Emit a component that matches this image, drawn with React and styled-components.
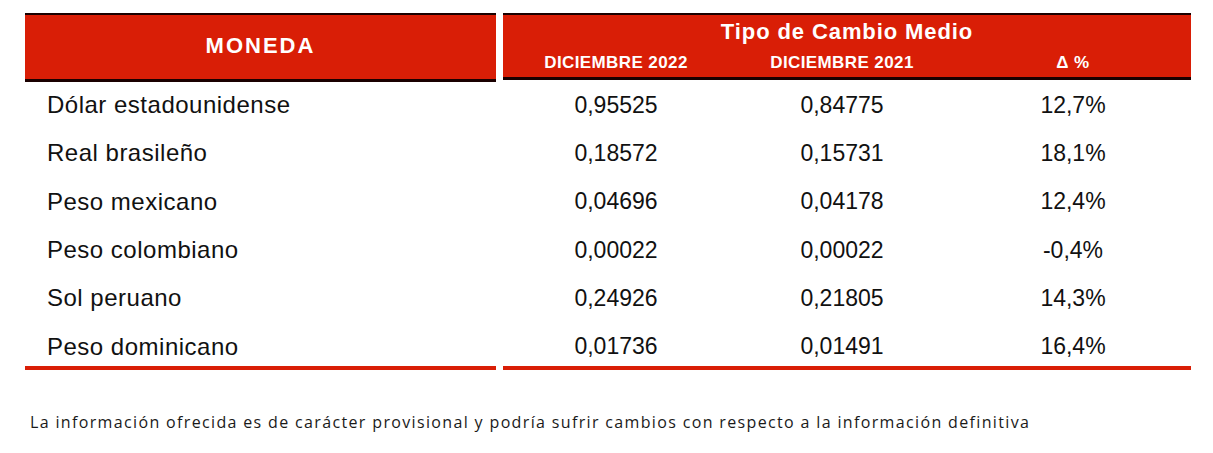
import React from "react";
import styled, { createGlobalStyle } from "styled-components";

const RED = "#d91e06";

const Global = createGlobalStyle`
  html, body { margin: 0; padding: 0; background: #ffffff; }
  body { font-family: "Liberation Sans", Arial, sans-serif; }
`;

const Page = styled.div`
  width: 1213px;
  height: 453px;
  box-sizing: border-box;
  padding: 13px 0 0 25px;
  background: #fff;
`;

const Header = styled.div`
  display: grid;
  grid-template-columns: 471px 688px;
  column-gap: 7px;
`;

const HeadCell = styled.div`
  background: ${RED};
  border-top: 2px solid #1a0000;
  border-bottom: 3px solid #1a0000;
  height: 62px;
  color: #fff;
  font-weight: 700;
`;

const MonedaCell = styled(HeadCell)`
  display: flex;
  align-items: center;
  justify-content: center;
  font-size: 22px;
  letter-spacing: 2px;
  padding-bottom: 2px;
  box-sizing: content-box;
`;

const GroupCell = styled(HeadCell)`
  display: flex;
  flex-direction: column;
`;

const GroupTitle = styled.div`
  height: 34px;
  display: flex;
  align-items: center;
  justify-content: center;
  font-size: 22px;
  letter-spacing: 0.9px;
`;

const SubRow = styled.div`
  display: grid;
  grid-template-columns: 226px 226px 236px;
  align-items: center;
  height: 28px;
`;

const SubHead = styled.div`
  text-align: center;
  font-size: 17px;
  letter-spacing: 0.4px;
`;

const Body = styled.div`
  display: flex;
  flex-direction: column;
  margin-top: -1px;
`;

const Row = styled.div`
  display: grid;
  grid-template-columns: 478px 226px 226px 236px;
  height: 48.3px;
  align-items: center;
  color: #111;
`;

const Name = styled.div`
  padding-left: 22px;
  font-size: 24px;
  letter-spacing: 0.5px;
`;

const Num = styled.div`
  text-align: center;
  font-size: 23px;
`;

const Rules = styled.div`
  display: grid;
  grid-template-columns: 471px 688px;
  column-gap: 7px;
  margin-top: -5px;
`;

const Rule = styled.div`
  height: 4px;
  background: ${RED};
`;

const Note = styled.p`
  margin: 41px 0 0 5px;
  font-family: "Open Sans", "Noto Sans", sans-serif;
  font-size: 16px;
  letter-spacing: 1.35px;
  color: #1a1a1a;
`;

const rows = [
  ["Dólar estadounidense", "0,95525", "0,84775", "12,7%"],
  ["Real brasileño", "0,18572", "0,15731", "18,1%"],
  ["Peso mexicano", "0,04696", "0,04178", "12,4%"],
  ["Peso colombiano", "0,00022", "0,00022", "-0,4%"],
  ["Sol peruano", "0,24926", "0,21805", "14,3%"],
  ["Peso dominicano", "0,01736", "0,01491", "16,4%"],
];

export default function App() {
  return (
    <Page>
      <Global />
      <Header>
        <MonedaCell>MONEDA</MonedaCell>
        <GroupCell>
          <GroupTitle>Tipo de Cambio Medio</GroupTitle>
          <SubRow>
            <SubHead>DICIEMBRE 2022</SubHead>
            <SubHead>DICIEMBRE 2021</SubHead>
            <SubHead>Δ %</SubHead>
          </SubRow>
        </GroupCell>
      </Header>
      <Body>
        {rows.map((r) => (
          <Row key={r[0]}>
            <Name>{r[0]}</Name>
            <Num>{r[1]}</Num>
            <Num>{r[2]}</Num>
            <Num>{r[3]}</Num>
          </Row>
        ))}
      </Body>
      <Rules>
        <Rule />
        <Rule />
      </Rules>
      <Note>
        La información ofrecida es de carácter provisional y podría sufrir cambios con respecto a la información definitiva
      </Note>
    </Page>
  );
}
